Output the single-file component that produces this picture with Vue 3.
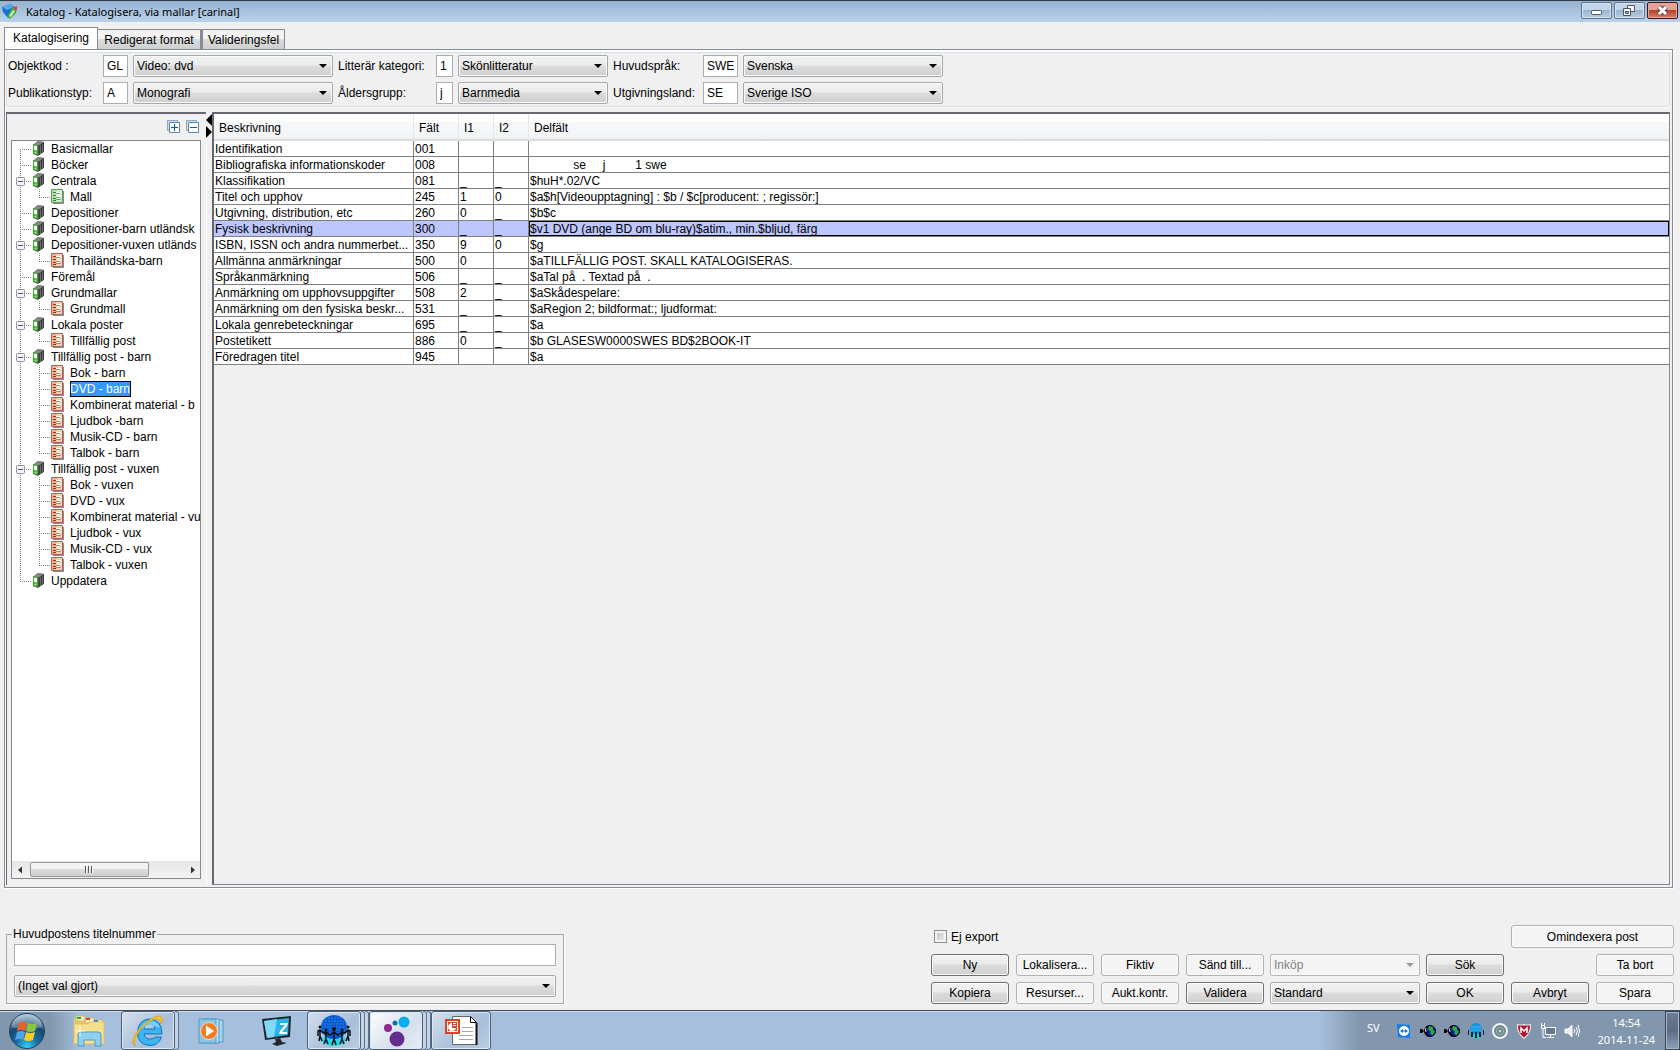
<script setup>
import { ref } from 'vue'

const tabs = ['Katalogisering', 'Redigerat format', 'Valideringsfel']
const filters = [
  { id: 'objekt', label: 'Objektkod :', code: 'GL', value: 'Video: dvd' },
  { id: 'kategori', label: 'Litterär kategori:', code: '1', value: 'Skönlitteratur' },
  { id: 'sprak', label: 'Huvudspråk:', code: 'SWE', value: 'Svenska' },
  { id: 'typ', label: 'Publikationstyp:', code: 'A', value: 'Monografi' },
  { id: 'alder', label: 'Åldersgrupp:', code: 'j', value: 'Barnmedia' },
  { id: 'land', label: 'Utgivningsland:', code: 'SE', value: 'Sverige ISO' },
]

const groups = [
  { name: 'Basicmallar' },
  { name: 'Böcker' },
  { name: 'Centrala', children: ['Mall'], green: true },
  { name: 'Depositioner' },
  { name: 'Depositioner-barn utländsk' },
  { name: 'Depositioner-vuxen utländs', children: ['Thailändska-barn'] },
  { name: 'Föremål' },
  { name: 'Grundmallar', children: ['Grundmall'] },
  { name: 'Lokala poster', children: ['Tillfällig post'] },
  {
    name: 'Tillfällig post - barn',
    children: ['Bok - barn', 'DVD - barn', 'Kombinerat material - b', 'Ljudbok -barn', 'Musik-CD - barn', 'Talbok - barn'],
  },
  {
    name: 'Tillfällig post - vuxen',
    children: ['Bok - vuxen', 'DVD - vux', 'Kombinerat material - vu', 'Ljudbok - vux', 'Musik-CD - vux', 'Talbok - vuxen'],
  },
  { name: 'Uppdatera' },
]
const selected = ref('DVD - barn')

const rows = [
  ['Identifikation', '001', '', '', ''],
  ['Bibliografiska informationskoder', '008', '', '', ' '.repeat(13) + 'se' + ' '.repeat(5) + 'j' + ' '.repeat(9) + '1 swe'],
  ['Klassifikation', '081', '_', '_', '$huH*.02/VC'],
  ['Titel och upphov', '245', '1', '0', '$a$h[Videoupptagning] : $b / $c[producent: ; regissör:]'],
  ['Utgivning, distribution, etc', '260', '0', '_', '$b$c'],
  ['Fysisk beskrivning', '300', '_', '_', '$v1 DVD (ange BD om blu-ray)$atim., min.$bljud, färg'],
  ['ISBN, ISSN och andra nummerbet...', '350', '9', '0', '$g'],
  ['Allmänna anmärkningar', '500', '0', '', '$aTILLFÄLLIG POST. SKALL KATALOGISERAS.'],
  ['Språkanmärkning', '506', '_', '_', '$aTal på  . Textad på  .'],
  ['Anmärkning om upphovsuppgifter', '508', '2', '_', '$aSkådespelare:'],
  ['Anmärkning om den fysiska beskr...', '531', '_', '_', '$aRegion 2; bildformat:; ljudformat:'],
  ['Lokala genrebeteckningar', '695', '_', '_', '$a'],
  ['Postetikett', '886', '0', '_', '$b GLASESW0000SWES BD$2BOOK-IT'],
  ['Föredragen titel', '945', '', '', '$a'],
]
const activeField = '300'
</script>

<template>
  <div class="app">
    <header class="titlebar">
      <svg class="logo" width="16" height="16" viewBox="0 0 16 16">
        <path d="M0 3 8 0l5 3-1 7-6 4-5-6z" fill="#1c6fd0" />
        <path d="m0 3 8-3 4 3-7 3z" fill="#58a7ee" />
        <path d="m5 13 5-9 5-1-1 6-6 6z" fill="#3fae49" />
        <path d="m7 12 4-6 2 1-4 6z" fill="#c9f0b0" />
        <path d="m12 3 3-1v4l-2 1z" fill="#e0463a" />
      </svg>
      <h1>Katalog - Katalogisera, via mallar [carinal]</h1>
      <div class="winbtns">
        <button aria-label="Minimera"><svg width="29" height="15"><rect x="9.5" y="7.5" width="10" height="4" rx="1" fill="#fff" stroke="#4b5564" /></svg></button>
        <button aria-label="Återställ">
          <svg width="29" height="15" fill="#f4f6f8" stroke="#4b5564"><path d="M12.5 2.5h7v6h-7z" /><path d="M8.5 5.5h7v7h-7z" /><path d="M10.5 8.5h3v2h-3z" fill="#9ab3cf" /></svg>
        </button>
        <button class="close" aria-label="Stäng">
          <svg width="29" height="15"><path d="m11 4 7 7m0-7-7 7" stroke="#5a4550" stroke-width="5" /><path d="m11 4 7 7m0-7-7 7" stroke="#fff" stroke-width="3" /></svg>
        </button>
      </div>
    </header>

    <nav class="tabs">
      <button v-for="(t, i) in tabs" :key="t" :class="{ active: i === 0 }">{{ t }}</button>
    </nav>

    <main class="page">
      <section class="filters">
        <template v-for="f in filters" :key="f.id">
          <label :for="f.id">{{ f.label }}</label>
          <input :id="f.id" type="text" :value="f.code" />
          <span class="select"><select :aria-label="f.label"><option>{{ f.value }}</option></select></span>
        </template>
      </section>

      <div class="panes">
        <aside class="side">
          <div class="sidetools">
            <button aria-label="Expandera alla">
              <svg width="13" height="13" fill="#fff"><path d="M.5 .5h10v10H.5z" fill="#cfdeec" stroke="#8ea6be" /><path d="M2.5 2.5h10v10h-10z" stroke="#5f86ad" /><path d="M4 7.5h7M7.5 4v7" stroke="#0a5a9c" /></svg>
            </button>
            <button aria-label="Minimera alla">
              <svg width="13" height="13" fill="#fff"><path d="M.5 .5h10v10H.5z" fill="#cfdeec" stroke="#8ea6be" /><path d="M2.5 2.5h10v10h-10z" stroke="#5f86ad" /><path d="M4 7.5h7" stroke="#0a5a9c" /></svg>
            </button>
          </div>
          <div class="treebox">
            <ul class="tree">
              <li v-for="(g, gi) in groups" :key="g.name">
                <div class="node">
                  <svg class="guide" width="20" height="16">
                    <path class="dots" :d="`M8.5 ${gi ? 0 : 8}V${gi === groups.length - 1 ? 8 : 16}M8 8.5H19`" />
                    <g v-if="g.children"><rect x="4.5" y="4.5" width="8" height="8" rx="1" fill="#f4f4f6" stroke="#919191" /><path d="M6 8.5h5" stroke="#3b55a5" /></g>
                  </svg>
                  <svg class="ico" width="13" height="15" viewBox="0 0 13 15">
                    <path d="M1 4 6 0l6 1v9.500L6 15l-5-2z" fill="#505050" />
                    <path d="m1 4 5-4 6 1-5 3.500z" fill="#858585" />
                    <path d="M7 4.500 12 1v9.500L7 14z" fill="#3c3c3c" />
                    <path d="m1 3.500 5 .5v10l-5-1z" fill="#35a52c" />
                    <path d="m2 4.500 3 .5v4.500L2 9z" fill="#f2f4f2" />
                    <path d="M2.500 10.500h2v2h-2z" fill="#a2f07c" />
                    <path d="M8.500 4v9M10.500 3v8" stroke="#808080" stroke-width=".7" />
                  </svg>
                  <span>{{ g.name }}</span>
                </div>
                <ul v-if="g.children">
                  <li v-for="(c, ci) in g.children" :key="c" class="node" @click="selected = c">
                    <svg class="guide" width="20" height="16"><path class="dots" d="M8.5 0V16" /></svg>
                    <svg class="guide" width="19" height="16"><path class="dots" :d="`M7.5 0V${ci === g.children.length - 1 ? 8 : 16}M7 8.5H18`" /></svg>
                    <svg class="ico" width="13" height="15" viewBox="0 0 13 15">
                      <path d="M2 2h11v13H2z" fill="#8d8d8d" />
                      <path d="M.5 .5h11v13H.5z" :fill="g.green ? '#b9dcb4' : '#e3b79b'" :stroke="g.green ? '#5b9a5b' : '#b5614a'" />
                      <path d="M5 1h6v12H5z" :fill="g.green ? '#d3ebcf' : '#efd2bd'" />
                      <path d="M2 3.500h3M2 6.500h3M2 9.500h3M2 11.500h3" :stroke="g.green ? '#2f8a2f' : '#a52a12'" />
                      <path d="M5 3.500h5M6 5.500h3M6 7.500h4M6 9.500h3" stroke="#fff" />
                      <path d="M5 4.500h4M5 8.500h4M5 10.500h5" :stroke="g.green ? '#5fae5f' : '#c67c5c'" />
                    </svg>
                    <span :class="{ sel: c === selected }">{{ c }}</span>
                  </li>
                </ul>
              </li>
            </ul>
            <div class="hscroll">
              <button aria-label="Rulla vänster"><svg width="16" height="16"><path d="M10 4.500v7l-4-3.500z" fill="#333" /></svg></button>
              <div class="track"><div class="thumb"><i></i><i></i><i></i></div></div>
              <button aria-label="Rulla höger"><svg width="16" height="16"><path d="M7 4.500v7l4-3.500z" fill="#333" /></svg></button>
            </div>
          </div>
        </aside>

        <div class="splitter">
          <svg width="6" height="28"><path d="M6 2v12L0 8z" /><path d="M0 14v12l6-6z" /></svg>
        </div>

        <section class="grid">
          <table>
            <colgroup><col class="c1" /><col class="c2" /><col class="c3" /><col class="c3" /><col /></colgroup>
            <thead>
              <tr><th>Beskrivning</th><th>Fält</th><th>I1</th><th>I2</th><th>Delfält</th></tr>
            </thead>
            <tbody>
              <tr v-for="r in rows" :key="r[1]" :class="{ current: r[1] === activeField }">
                <td v-for="(c, i) in r" :key="i">{{ c }}</td>
              </tr>
            </tbody>
          </table>
        </section>
      </div>
    </main>

    <footer class="actions">
      <fieldset>
        <legend>Huvudpostens titelnummer</legend>
        <input type="text" aria-label="Huvudpostens titelnummer" />
        <span class="select"><select aria-label="Val"><option>(Inget val gjort)</option></select></span>
      </fieldset>
      <div class="buttons">
        <label class="check"><input type="checkbox" />Ej export</label>
        <button class="btn light wide">Omindexera post</button>
        <button class="btn">Ny</button>
        <button class="btn light">Lokalisera...</button>
        <button class="btn light">Fiktiv</button>
        <button class="btn light">Sänd till...</button>
        <span class="select off"><select disabled aria-label="Sändmål"><option>Inköp</option></select></span>
        <button class="btn">Sök</button>
        <button class="btn light last">Ta bort</button>
        <button class="btn">Kopiera</button>
        <button class="btn light">Resurser...</button>
        <button class="btn light">Aukt.kontr.</button>
        <button class="btn">Validera</button>
        <span class="select"><select aria-label="Validering"><option>Standard</option></select></span>
        <button class="btn">OK</button>
        <button class="btn">Avbryt</button>
        <button class="btn light">Spara</button>
      </div>
    </footer>

    <div class="taskbar">
      <div class="apps">
        <button class="start" aria-label="Start">
          <svg width="38" height="38" viewBox="0 0 38 38">
            <defs>
              <radialGradient id="orb" cx=".5" cy=".95" r=".9"><stop offset="0" stop-color="#35d3f5" /><stop offset=".35" stop-color="#176fa5" /><stop offset=".7" stop-color="#17466f" /><stop offset="1" stop-color="#8fb0c9" /></radialGradient>
            </defs>
            <circle cx="19" cy="19" r="17.500" fill="url(#orb)" stroke="#28425c" />
            <path d="M4 15a15 13 0 0 1 30 0q-15 6-30 0z" fill="#fff" opacity=".28" />
            <path d="M11 11q4-3 8 0l-2 8q-4-2-8 0z" fill="#f0602b" />
            <path d="M20 11q4 2 9 0l-2 8q-5 2-9 0z" fill="#8cc63e" />
            <path d="M9 20q4-2 8 0l-2 8q-4-2-8 0z" fill="#4ea3e6" />
            <path d="M18 20q4 2 9 0l-2 8q-5 2-9 0z" fill="#fcc928" />
          </svg>
        </button>
        <button class="task plain" aria-label="Utforskaren">
          <svg width="34" height="32" viewBox="0 0 34 32">
            <path d="M2 3h8l2 3h20v22H2z" fill="#e9c968" />
            <path d="M4 1h9v5H4zM13 3h9v5h-9zM22 5h9v5h-9z" fill="#f7edc0" stroke="#c9a84a" stroke-width=".7" />
            <path d="M5 2h4v2H5z" fill="#2da344" /><path d="M14 3h4v2h-4z" fill="#d93a25" /><path d="M22 5h4v2h-4z" fill="#2f8ad0" />
            <path d="M2 9h14l2-2h14v22H2z" fill="#f6e08c" stroke="#d9b85a" stroke-width=".7" />
            <path d="M6 31V20q0-3 3-3h17q3 0 3 3v11h-6v-6H12v6z" fill="#8fd0ee" stroke="#4a9cc9" />
            <path d="M8 11v10M3 16h10" stroke="#fff" opacity=".8" />
          </svg>
        </button>
        <button class="task" aria-label="Internet Explorer">
          <svg width="34" height="34" viewBox="0 0 34 34">
            <path d="M31 20H13q1 5 6 5 4 0 5-2h6.500q-3 9-12 8.500-12-1-12-13Q7 6 18 5q13 0 13 15zM13 15h11q-1-5-5.500-5T13 15z" fill="#3cb4f2" stroke="#1672bd" />
            <path d="M9 15q3-8 10-8 8 0 10 7-6-4-20 1z" fill="#a4def9" opacity=".6" />
            <path d="M4 32Q-2 27 8 15 20 2 29 2q4 2 1 8 0-5-5-5Q17 6 9 16q-7 9-5 16z" fill="#fbc62b" stroke="#d99a12" stroke-width=".7" />
          </svg>
        </button>
        <i class="stack"></i>
        <button class="task plain media" aria-label="Mediaspelare">
          <svg width="30" height="28" viewBox="0 0 30 28">
            <path d="M8 3h17v22H8z" fill="#a9d4ec" stroke="#4f9cc6" /><path d="M4 2h17v24H4z" fill="#bfe0f2" stroke="#4f9cc6" /><path d="M1 2h17v24H1z" fill="#8cc4e4" stroke="#4f9cc6" />
            <circle cx="11" cy="14" r="8.500" fill="#f47b20" stroke="#e0e0e0" /><path d="M8 8.500v11l8-5.500z" fill="#fff" />
          </svg>
        </button>
        <button class="task plain monitor" aria-label="Fjärrskärm">
          <svg width="32" height="32" viewBox="0 0 32 32">
            <path d="m1 4 29-3-1 21-25 3z" fill="#202428" /><path d="m3 6 25-3-1 17-21 3z" fill="#27b4e6" /><path d="m3 6 13-2-3 18-7 1z" fill="#7fd8f5" />
            <path d="M19 8h8l-1 3-5 6h5v2h-8l1-3 5-6h-5z" fill="#fff" /><path d="m14 24 5-1 2 4 5 1-10 3-5-2 4-2z" fill="#24282c" />
          </svg>
        </button>
        <button class="task" aria-label="Bibliotekssystem">
          <svg width="34" height="34" viewBox="0 0 34 34">
            <ellipse cx="17" cy="26" rx="12" ry="6" fill="#29d7e3" /><ellipse cx="17" cy="13" rx="13" ry="12" fill="#0a55c8" />
            <path d="M8 4h18M5 7h24M4 10h26M4 13h26M6 16h22M9 19h16" stroke="#2196f3" stroke-dasharray="2 1" />
            <g fill="#031018"><circle cx="3" cy="13" r="1.500" /><circle cx="9" cy="16" r="1.500" /><circle cx="17" cy="15" r="2" /><circle cx="25" cy="16" r="1.500" /><circle cx="31" cy="13" r="1.500" /></g>
            <path d="M1 22v-5l2-1 3 3 3-1 4 3 4-3 4 3 4-3 3 1 3-3 2 1v5M3 16v6l-1 5m1-5 2 5M9 18v7l-2 5m2-5 2 5m6-12v7l-2 6m2-6 2 6m6-13v7l-2 5m2-5 2 5m4-14v6l-2 5m2-5 1 5" stroke="#031018" stroke-width="1.500" fill="none" />
          </svg>
        </button>
        <i class="stack"></i><i class="stack"></i>
        <button class="task lit" aria-label="Prickar">
          <svg width="30" height="32" viewBox="0 0 30 32"><circle cx="23" cy="7" r="5.500" fill="#00adef" /><circle cx="14" cy="8" r="2.500" fill="#0b6fb8" /><circle cx="7" cy="13" r="4" fill="#93278f" /><circle cx="16" cy="24" r="7.500" fill="#662d91" /></svg>
        </button>
        <i class="stack"></i><i class="stack"></i>
        <button class="task ppt" aria-label="PowerPoint">
          <svg width="34" height="32" viewBox="0 0 34 32">
            <path d="M8.500 1.500h18l6 6v22h-24z" fill="#fff" stroke="#666" /><path d="M26.500 1.500v6h6z" fill="#fff" stroke="#111" /><path d="M32.500 8v22" stroke="#111" stroke-width="2" />
            <path d="M18 12.500h11M18 16.500h11M15 20.500h14M15 24.500h14" stroke="#aaa" />
            <path d="M1 4h15v15H1z" fill="#d24726" /><path d="M3.500 6.500h10v10h-10z" fill="#d24726" stroke="#fff" /><path d="M8 8a4 4 0 1 0 4 5H8z" fill="#fff" /><path d="M9 8h3v1H9zM9 10h3v1H9z" fill="#fff" />
          </svg>
        </button>
      </div>
      <div class="tray">
        <span class="lang">SV</span>
        <div class="trayicons">
          <svg viewBox="0 0 16 16"><path d="m1 1 13 1v13L2 14z" fill="#0f7cf0" /><circle cx="8" cy="8" r="5" fill="#fff" /><path d="m4 8 3-2v1.500h2V6l3 2-3 2V8.500H7V10z" fill="#0f6fe0" /></svg>
          <svg v-for="n in 2" :key="n" viewBox="0 0 16 16">
            <circle cx="10" cy="8" r="5.500" fill="#1515a8" stroke="#000" /><path d="m9 3 4 1v3l2 1-2 4-3-1 1-3-3-1z" fill="#25b13a" />
            <path d="M0 6h2l2 2-2 2H0z" fill="#000" /><path d="M8 3Q3 8 8 13" stroke="#000" stroke-width="2" fill="none" /><path d="M6 5q-1 2 0 4" stroke="#e8e8ff" fill="none" />
          </svg>
          <svg viewBox="0 0 16 16"><circle cx="8" cy="6" r="6" fill="#1593dc" /><path d="M3 4h10M3 7h10" stroke="#45b9f3" /><path d="M3 11h10v4H3z" fill="#22cfd6" /><path d="M0 7h1v5H0zM3 9h2v5H3zM7 9h2v6H7zM11 9h2v5h-2zM15 7h1v5h-1z" fill="#06263a" /></svg>
          <svg viewBox="0 0 16 16"><circle cx="8" cy="8" r="7" fill="#6e868c" stroke="#f0f4f5" stroke-width="2" /><circle cx="8" cy="8" r="3.500" fill="#5c7880" stroke="#a9bfc2" /><circle cx="8" cy="8" r="1.500" fill="#c7d6d6" /></svg>
          <svg viewBox="0 0 16 16"><path d="M1 1q4 1 7 0 3 1 7 0 .5 10-7 15Q.5 11 1 1z" fill="#eee" /><path d="M2 2.500h12q0 8-6 12-6-4-6-12z" fill="#b01833" /><path d="M5 10V5l3 3 3-3v5" fill="none" stroke="#fff" stroke-width="1.500" /></svg>
          <svg viewBox="0 0 16 16" fill="none" stroke="#fff"><path d="M5.500 4.500h10v7h-10z" fill="#657991" /><path d="M7 14.500h7M10.500 12v2M3 6v8.500h3" /><path d="M1.500 2.500v3h3v-3zM1.500 0v2M4.500 0v2" /></svg>
          <svg viewBox="0 0 16 16" fill="none" stroke="#fff"><path d="M1 6h3l4-4v12l-4-4H1z" fill="#e9edf1" /><path d="M10 6q2 2 0 4M12 4q3 4 0 8M14 2q3 6 0 12" /></svg>
        </div>
        <div class="clock"><div>14:54</div><div>2014-11-24</div></div>
        <button class="desk" aria-label="Visa skrivbordet"></button>
      </div>
    </div>
  </div>
</template>

<style>
body { margin: 0; background: #f0f0f0; }
</style>

<style scoped>
* { box-sizing: border-box; }
.app {
  display: flex; flex-direction: column; min-height: 100vh; background: #f0f0f0; color: #000;
  font: 12px/16px "Liberation Sans", Arial, sans-serif; overflow: hidden;
}
button, input, select { font: inherit; color: inherit; margin: 0; }
button { padding: 0; border: 0; background: none; }
svg { display: block; flex: none; }
ul { list-style: none; margin: 0; padding: 0; }

.titlebar {
  display: flex; align-items: center; height: 22px; padding: 0 2px;
  border-top: 1px solid #33373f; background: linear-gradient(#97b3d2, #b9d1ea);
}
.titlebar h1 { flex: 1; margin: 0 0 0 8px; font: 11px/18px "Noto Sans", sans-serif; }
.winbtns { display: flex; align-self: flex-start; gap: 2px; padding-top: 1px; }
.winbtns button {
  width: 31px; height: 17px; border: 1px solid #5f7590; border-radius: 2px;
  box-shadow: inset 0 0 0 1px #d4e2f1; background: linear-gradient(#c2d5ea 45%, #9ab4d0 50%, #b6cee6);
}
.winbtns .close { border-color: #4a1218; box-shadow: inset 0 0 0 1px #e5a89d; background: linear-gradient(#e2a298 45%, #b8412c 50%, #d4806a); }

.tabs { display: flex; align-items: flex-end; height: 27px; margin: 0 7px 0 4px; padding-top: 5px; }
.tabs button {
  width: 84px; height: 20px; padding: 0; border: 1px solid #898c95; border-bottom: 0; border-left-width: 2px;
  background: linear-gradient(#f2f2f2 45%, #dcdcdc 50%, #cfcfcf); white-space: nowrap; line-height: 21px;
}
.tabs button:nth-child(2) { width: 103px; border-left-width: 0; }
.tabs .active { width: 94px; height: 22px; border-left-width: 1px; background: #fff; }

.page {
  flex: 1; display: flex; flex-direction: column; margin: 0 7px 0 4px; padding: 2px 2px 2px 1px;
  border: 1px solid #898c95; box-shadow: inset 0 2px #fff, inset 1px 0 #fff, 1px 1px #fff;
}
.filters {
  display: grid; align-items: center; align-content: start; row-gap: 5px; height: 55px;
  grid-template-columns: 95px 25px 210px 98px 17px 160px 90px 35px 205px;
  padding: 2px 0 0 1px; border: 1px solid #d5dfe5; border-radius: 3px; box-shadow: 0 1px #fff;
}
.filters input { width: 100%; height: 22px; padding: 0 3px; border: 1px solid #abadb3; background: #fff; }
.filters .select { margin: 0 5px; }
.filters .select:nth-child(9n) { margin-right: 0; }

.select { position: relative; display: block; }
.select select {
  display: block; width: 100%; height: 22px; padding: 0 16px 0 3px; appearance: none; opacity: 1;
  border: 1px solid #a5a7ad; border-radius: 2px; box-shadow: inset 0 0 0 1px #fafafa;
  background: linear-gradient(#f2f2f2, #ebebeb 45%, #dcdcdc 50%, #cfcfcf);
}
.select::after {
  content: ""; position: absolute; right: 6px; top: 9px; border: 4px solid transparent; border-top-color: #000; border-bottom: 0;
  pointer-events: none;
}
.off select { color: #838383; background: #f4f4f4; border-color: #b5b7bb; }
.off::after { border-top-color: #9a9a9a; }

.panes { flex: 1; display: flex; margin-top: 5px; min-height: 0; }
.side {
  display: flex; flex-direction: column; width: 200px; padding: 0 5px 6px 4px;
  border: solid #646870; border-width: 2px 0 0 1px; box-shadow: 1px 0 #fff;
}
.sidetools { display: flex; justify-content: flex-end; gap: 6px; height: 26px; padding: 6px 2px 0 0; align-items: flex-start; }
.treebox { flex: 1; display: flex; flex-direction: column; border: 1px solid #828790; background: #fff; }
.tree { flex: 1; overflow: hidden; }
.node { display: flex; height: 16px; white-space: nowrap; }
.node span { margin-left: 6px; line-height: 16px; }
.node .sel { background: #39f; color: #fff; box-shadow: inset 0 0 0 1px #000; padding-right: 1px; }
.dots { fill: none; stroke: #808080; stroke-dasharray: 1 1; }
.hscroll { display: flex; height: 17px; background: linear-gradient(#e6e6e6, #f2f2f2); }
.track { flex: 1; padding: 1px 2px; }
.thumb {
  display: flex; justify-content: center; align-items: center; gap: 1px; width: 78%; height: 15px;
  border: 1px solid #979797; border-radius: 2px; background: linear-gradient(#f3f3f3 45%, #dcdcdc 50%, #cfcfcf);
}
.thumb i { width: 2px; height: 7px; border-left: 1px solid #555; background: #fff; }
.splitter { width: 6px; }

.grid { flex: 1; border: 1px solid #828790; border-top: 2px solid #646870; border-left: 2px solid #646870; overflow: hidden; }
table { width: 100%; table-layout: fixed; border-spacing: 0; }
.c1 { width: 200px; } .c2 { width: 45px; } .c3 { width: 35px; }
th {
  height: 27px; padding: 3px 5px 0; text-align: left; font-weight: normal;
  border-right: 1px solid #e3e6ea; border-bottom: 2px solid #dcdddf; background: linear-gradient(#fff 30%, #f7f8fa 31%, #f1f2f4);
}
td {
  height: 16px; padding: 2px 0 0 1px; line-height: 13px; background: #fff; border: solid #808080; border-width: 0 1px 1px 0;
  overflow: hidden; white-space: pre;
}
th:last-child, td:last-child { border-right-width: 0; }
.current td { background: #bdc6ff; }
.current td:last-child { box-shadow: inset 0 0 0 1px #000; }

.actions { display: flex; justify-content: space-between; align-items: flex-end; height: 122px; padding: 0 6px 6px; }
fieldset {
  display: flex; flex-direction: column; gap: 9px; width: 558px; margin: 0; padding: 2px 7px 6px;
  border: 1px solid #a5a7ad; box-shadow: 1px 1px #fff;
}
legend { padding: 0 1px; margin-left: -2px; }
fieldset input { height: 22px; border: 1px solid #abadb3; background: #fff; }
.buttons {
  display: grid; grid-template-columns: repeat(4, 78px) 148px repeat(3, 78px); column-gap: 7px; row-gap: 6px; align-items: center;
}
.btn {
  height: 22px; border: 1px solid #707070; border-radius: 3px; box-shadow: inset 0 0 0 1px #fafafa;
  background: linear-gradient(#f2f2f2, #ebebeb 45%, #dcdcdc 50%, #cfcfcf);
}
.light { background: #f4f4f4; border-color: #adb2b5; }
.buttons .wide { grid-column: 7 / 9; height: 23px; }
.buttons .last { grid-column: 8; }
.buttons .select { margin: 0 -1px; }
.check { display: flex; align-items: center; gap: 4px; grid-column: 1 / 3; padding-left: 3px; }
.check input {
  width: 13px; height: 13px; appearance: none; border: 1px solid #8e8f8f;
  box-shadow: inset 0 0 0 2px #f4f4f4; background: linear-gradient(135deg, #b8bcc4, #f6f6f6);
}

.taskbar {
  display: flex; justify-content: space-between; height: 40px; border-top: 1px solid #3f4c5c; box-shadow: inset 0 1px #c9dbee;
  background: linear-gradient(90deg, #8296ad 50px, #a6bfdc 80px, #a6bfdc);
}
.apps { display: flex; }
.start { width: 54px; padding-left: 8px; }
.task {
  display: flex; justify-content: center; align-items: center; width: 54px; height: 39px; border: 1px solid #4d6078; border-radius: 3px;
  box-shadow: inset 0 0 0 1px #dbe6f2; background: linear-gradient(135deg, #d3dfec, #a9bfd9 60%, #b9cce2);
}
.plain { width: 67px; padding-left: 3px; border-color: transparent; background: none; box-shadow: none; }
.media, .monitor { width: 64px; }
.lit { background: linear-gradient(135deg, #fff, #d5e0ec 60%, #e6edf5); }
.ppt { width: 60px; }
.stack { width: 4px; border: solid #5f738c; border-width: 1px 1px 1px 0; border-radius: 0 3px 3px 0; background: #c4d4e6; }
.tray {
  display: flex; align-items: center; padding-left: 47px; color: #fff; font: 11px/17px "Noto Sans", sans-serif;
  background: linear-gradient(90deg, #a6bfdc, #8296ad 40px);
}
.lang { margin: 0 16px 6px 0; }
.trayicons { display: flex; gap: 8px; }
.trayicons svg { width: 16px; height: 16px; }
.clock { margin: 0 10px 0 18px; text-align: center; }
.desk { align-self: stretch; width: 15px; border: 1px solid #39434f; box-shadow: inset 0 0 0 1px #a9b8c8; background: linear-gradient(#6c7f95, #5a6c82 50%, #8ba0b8); }
</style>
